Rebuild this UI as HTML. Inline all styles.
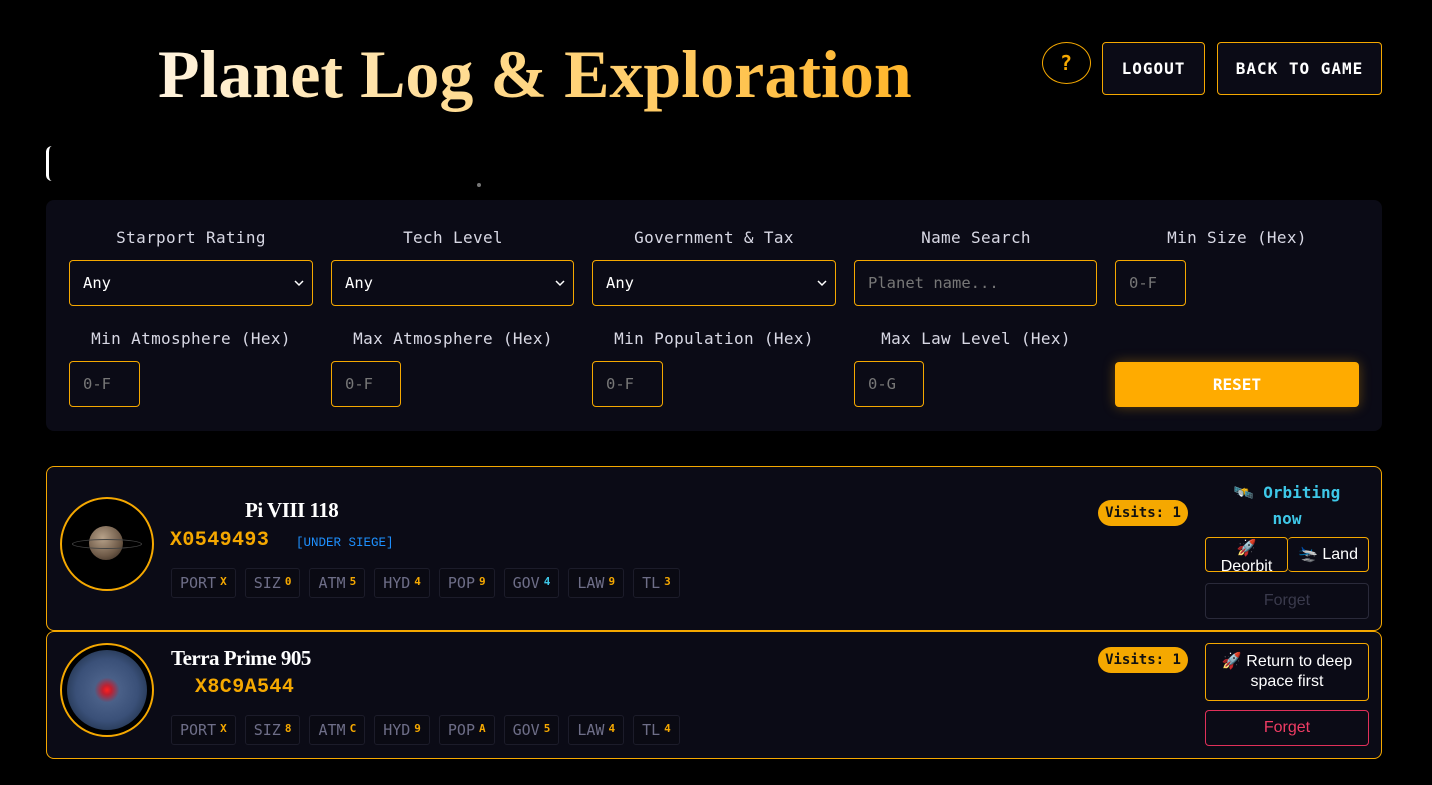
<!DOCTYPE html>
<html><head><meta charset="utf-8"><style>
*{box-sizing:border-box;margin:0;padding:0}
body{width:1432px;height:785px;background:#000;overflow:hidden;position:relative;font-family:"DejaVu Sans Mono","Liberation Mono",monospace;color:#e6e6f0}
.abs{position:absolute}
h1{position:absolute;left:158px;top:35px;font-family:"Liberation Serif",serif;font-weight:bold;font-size:68px;letter-spacing:0px;white-space:nowrap;background:linear-gradient(90deg,#fff3de 0%,#ffd98a 45%,#ffb52a 100%);-webkit-background-clip:text;background-clip:text;color:transparent}
.btn{position:absolute;border:1px solid #f5a800;border-radius:4px;background:#0b0b16;color:#fff;font-weight:bold;font-size:16px;display:flex;align-items:center;justify-content:center;letter-spacing:1px}
.panel{position:absolute;left:46px;top:200px;width:1336px;height:231px;background:#0b0b16;border-radius:8px}
.lab{position:absolute;width:244px;text-align:center;font-size:16px;letter-spacing:0.35px;color:#d8d8e4}
.sel{position:absolute;height:46px;border:1px solid #f5a800;border-radius:4px;background:#0b0b16;font-size:15.5px;padding-left:13px;display:flex;align-items:center;color:#fff}
.sel.ph{color:#777}
.chev{position:absolute;right:8px;top:17px;width:10px;height:10px}
.card{position:absolute;left:46px;width:1336px;border:1px solid #f5a800;border-radius:8px;background:#0b0b16}
.pl{position:absolute;left:13px;width:94px;height:94px;border:2px solid #f5a800;border-radius:50%;background:#000;overflow:hidden}
.name{position:absolute;font-family:"Liberation Serif",serif;font-weight:bold;font-size:21px;color:#fff;letter-spacing:-0.5px}
.code{position:absolute;font-family:"Liberation Mono",monospace;font-weight:bold;font-size:20px;letter-spacing:0.4px;color:#f5a800}
.tags{position:absolute;left:124px;display:flex;gap:9px}
.tag{height:30px;border:1px solid #1c1c2a;border-radius:3px;background:#0a0a13;font-size:15px;color:#6e6e88;display:flex;align-items:center;padding:0 8px}
.tag b{font-size:11px;color:#f5a800;margin-left:4px;position:relative;top:-2px}
.visits{position:absolute;left:1051px;width:90px;height:26px;border-radius:13px;background:#f5a800;color:#111;font-weight:bold;font-size:14px;display:flex;align-items:center;justify-content:center}
.sbtn{position:absolute;border-radius:4px;font-family:"Liberation Sans",sans-serif;font-size:16px;display:flex;align-items:center;justify-content:center;text-align:center;line-height:20px}
</style></head><body>
<h1>Planet Log &amp; Exploration</h1>
<div class="abs" style="left:46px;top:146px;width:6px;height:35px;border-left:3px solid #fff;border-radius:6px 0 0 6px"></div>
<div class="abs" style="left:477px;top:183px;width:4px;height:4px;border-radius:50%;background:#777"></div>
<div class="btn" style="left:1042px;top:42px;width:49px;height:42px;border-radius:50%;background:#000;color:#f5a800;font-size:20px">?</div>
<div class="btn" style="left:1102px;top:42px;width:103px;height:53px">LOGOUT</div>
<div class="btn" style="left:1217px;top:42px;width:165px;height:53px">BACK TO GAME</div>

<div class="panel">
<div class="lab" style="left:23px;top:28px">Starport Rating</div>
<div class="lab" style="left:285px;top:28px">Tech Level</div>
<div class="lab" style="left:546px;top:28px">Government &amp; Tax</div>
<div class="lab" style="left:808px;top:28px">Name Search</div>
<div class="lab" style="left:1069px;top:28px;width:244px">Min Size (Hex)</div>
<div class="sel" style="left:23px;top:60px;width:244px">Any<svg class="chev" viewBox="0 0 10 10"><path d="M1 3l4 4 4-4" stroke="#fff" stroke-width="1.5" fill="none"/></svg></div>
<div class="sel" style="left:285px;top:60px;width:243px">Any<svg class="chev" viewBox="0 0 10 10"><path d="M1 3l4 4 4-4" stroke="#fff" stroke-width="1.5" fill="none"/></svg></div>
<div class="sel" style="left:546px;top:60px;width:244px">Any<svg class="chev" viewBox="0 0 10 10"><path d="M1 3l4 4 4-4" stroke="#fff" stroke-width="1.5" fill="none"/></svg></div>
<div class="sel ph" style="left:808px;top:60px;width:243px">Planet name...</div>
<div class="sel ph" style="left:1069px;top:60px;width:71px">0-F</div>
<div class="lab" style="left:23px;top:129px">Min Atmosphere (Hex)</div>
<div class="lab" style="left:285px;top:129px">Max Atmosphere (Hex)</div>
<div class="lab" style="left:546px;top:129px">Min Population (Hex)</div>
<div class="lab" style="left:808px;top:129px">Max Law Level (Hex)</div>
<div class="sel ph" style="left:23px;top:161px;width:71px">0-F</div>
<div class="sel ph" style="left:285px;top:161px;width:70px">0-F</div>
<div class="sel ph" style="left:546px;top:161px;width:71px">0-F</div>
<div class="sel ph" style="left:808px;top:161px;width:70px">0-G</div>
<div class="abs" style="left:1069px;top:162px;width:244px;height:45px;background:#ffab00;border-radius:4px;color:#fff;font-weight:bold;font-size:16px;display:flex;align-items:center;justify-content:center;box-shadow:0 0 12px rgba(255,170,0,.35)">RESET</div>
</div>

<div class="card" style="top:466px;height:165px">
<div class="pl" style="top:30px"><div class="abs" style="left:27px;top:27px;width:34px;height:34px;border-radius:50%;background:radial-gradient(circle at 40% 35%,#b8a28a,#6e5a48 60%,#2a2018)"></div><div class="abs" style="left:10px;top:40px;width:70px;height:10px;border:1px solid #444;border-radius:50%"></div></div>
<div class="name" style="left:198px;top:31px">Pi VIII 118</div>
<div class="code" style="left:123px;top:62px">X0549493</div>
<div class="abs" style="left:249px;top:69px;font-family:'Liberation Mono',monospace;font-size:12.5px;color:#1e90ff">[UNDER SIEGE]</div>
<div class="tags" style="top:101px"><div class="tag">PORT<b>X</b></div><div class="tag">SIZ<b>0</b></div><div class="tag">ATM<b>5</b></div><div class="tag">HYD<b>4</b></div><div class="tag">POP<b>9</b></div><div class="tag">GOV<b style="color:#3ec8e8">4</b></div><div class="tag">LAW<b>9</b></div><div class="tag">TL<b>3</b></div></div>
<div class="visits" style="top:33px">Visits: 1</div>
<div class="abs" style="left:1175px;top:13px;width:130px;text-align:center;color:#3ec8e8;font-weight:bold;font-size:16px;line-height:26px">🛰️ Orbiting now</div>
<div class="sbtn" style="left:1158px;top:70px;width:83px;height:35px;border:1px solid #f5a800;color:#fff;line-height:18px;padding-top:6px;overflow:hidden">🚀<br>Deorbit</div>
<div class="sbtn" style="left:1241px;top:70px;width:81px;height:35px;border:1px solid #f5a800;border-left:none;color:#fff">🛬 Land</div>
<div class="sbtn" style="left:1158px;top:116px;width:164px;height:36px;border:1px solid #2a2a3a;color:#3a3a4c">Forget</div>
</div>

<div class="card" style="top:631px;height:128px">
<div class="pl" style="top:11px"><div class="abs" style="left:5px;top:5px;width:80px;height:80px;border-radius:50%;background:radial-gradient(circle at 50% 50%,#ff2020 0,#c02030 8%,#4a6088 22%,#3a5078 55%,#1a2a40 90%)"></div></div>
<div class="name" style="left:124px;top:14px">Terra Prime 905</div>
<div class="code" style="left:148px;top:44px">X8C9A544</div>
<div class="tags" style="top:83px"><div class="tag">PORT<b>X</b></div><div class="tag">SIZ<b>8</b></div><div class="tag">ATM<b>C</b></div><div class="tag">HYD<b>9</b></div><div class="tag">POP<b>A</b></div><div class="tag">GOV<b>5</b></div><div class="tag">LAW<b>4</b></div><div class="tag">TL<b>4</b></div></div>
<div class="visits" style="top:15px">Visits: 1</div>
<div class="sbtn" style="left:1158px;top:11px;width:164px;height:58px;border:1px solid #f5a800;color:#fff">🚀 Return to deep<br>space first</div>
<div class="sbtn" style="left:1158px;top:78px;width:164px;height:36px;border:1px solid #e0305a;color:#f03c64">Forget</div>
</div>
</body></html>
